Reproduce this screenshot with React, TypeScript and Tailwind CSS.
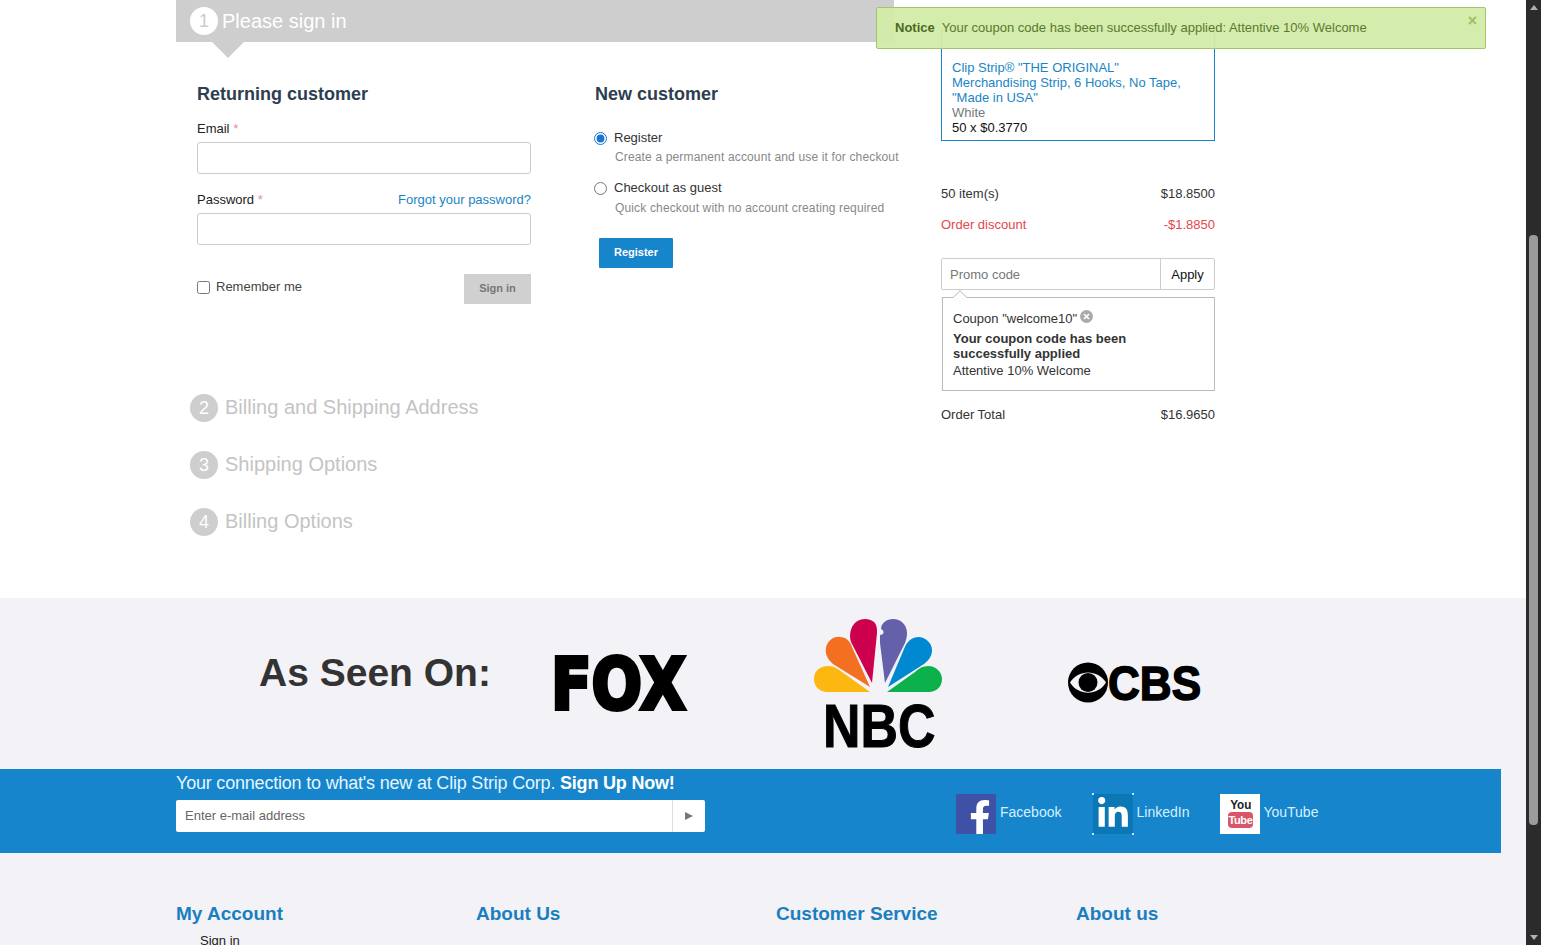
import { FaFacebookF, FaLinkedinIn } from 'react-icons/fa';

const footerColumns = ['My Account', 'About Us', 'Customer Service', 'About us'];
const steps = [
  { num: 2, title: 'Billing and Shipping Address' },
  { num: 3, title: 'Shipping Options' },
  { num: 4, title: 'Billing Options' },
];

function NbcLogo() {
  return (
    <svg width="129" height="142" viewBox="0 0 129 142" className="mt-[21px] ml-[120px] shrink-0">
      <path d="M56 73 L14 73 C5 73 0 67 0 60 C0 52 6 47 14 47 C20 47 24 50 28 53 Z" fill="#fcb711" />
      <path d="M56 68 L19 45 C13 40 11 34 12 29 C13 22 20 17 26 18 C32 18 36 22 38 28 Z" fill="#f37021" />
      <path d="M58 64 L37 23 C35 17 36 8 42 3 C47 -1 55 -1 60 3 C63 6 63 10 63 14 Z" fill="#cc004c" />
      <path d="M71 64 L66 24 L66 16 C70 16 71 12 67 10 C67 4 73 0 79 0 C87 0 93 6 93 14 C93 18 92 21 91 24 Z" fill="#6460aa" />
      <path d="M74 68 L90 30 C93 22 98 18 105 18 C113 19 118 25 118 31 C118 37 115 41 110 45 Z" fill="#0089d0" />
      <path d="M73 73 L101 53 C105 49 109 47 114 47 C122 47 128 53 128 60 C128 68 122 73 115 73 Z" fill="#0db14b" />
      <text
        transform="translate(9 128) scale(0.85 1)"
        fontFamily="'Liberation Sans', sans-serif"
        fontWeight="700"
        fontSize="61"
        fill="#000"
        stroke="#000"
        strokeWidth="1"
      >
        NBC
      </text>
    </svg>
  );
}

function CbsLogo() {
  return (
    <svg width="133" height="56" viewBox="0 -7 133 56" className="mt-[57px] ml-[125px] shrink-0">
      <circle cx="20" cy="20.5" r="20" fill="#000" />
      <path d="M2 20.5 C10 7 30 7 38 20.5 C30 34 10 34 2 20.5 Z" fill="#f2f2f7" />
      <circle cx="20" cy="20.5" r="9.5" fill="#000" />
      <text
        transform="translate(40 38) scale(0.9 1)"
        fontFamily="'Liberation Sans', sans-serif"
        fontWeight="700"
        fontSize="49"
        fill="#000"
        stroke="#000"
        strokeWidth="1.5"
      >
        CBS
      </text>
    </svg>
  );
}

function FoxLogo() {
  return (
    <svg width="145" height="86" viewBox="-6 -14 145 86" className="mt-[42px] ml-[58px] shrink-0">
      <text
        transform="translate(-4 54.5) scale(0.825 1)"
        fontFamily="'DejaVu Sans', sans-serif"
        fontWeight="700"
        fontSize="72"
        fill="#000"
        stroke="#000"
        strokeWidth="4"
      >
        FOX
      </text>
    </svg>
  );
}

export default function App() {
  return (
    <div className="relative flex h-[945px] overflow-hidden bg-white font-['Liberation_Sans',Arial,sans-serif] text-[13px] text-[#333]">
      <div className="w-[1526px] shrink-0">
        {/* Checkout */}
        <div className="flex h-[598px] pl-[176px]">
          <div className="w-[718px] shrink-0">
            <div className="relative flex h-[42px] items-center bg-[#cecece] pl-[14px] text-[20px] text-white">
              <span className="flex h-[28px] w-[28px] items-center justify-center rounded-full bg-white text-[18px] text-[#ccc]">1</span>
              <span className="ml-[4px]">Please sign in</span>
              <span className="absolute left-[36px] top-[42px] h-0 w-0 border-x-[16px] border-t-[16px] border-x-transparent border-t-[#cecece]" />
            </div>

            <div className="mt-[40px] flex pl-[21px]">
              <div className="w-[334px] shrink-0">
                <h2 className="text-[18px] leading-[24px] font-bold text-[#2c3e50]">Returning customer</h2>
                <div className="mt-[12px] pt-px leading-[20px] text-[#222]">
                  Email <span className="text-[#e0909a]">*</span>
                </div>
                <input className="mt-[3px] block h-[32px] w-full rounded-[3px] border border-[#ccc] bg-white" />
                <div className="mt-[15px] flex justify-between pt-px leading-[20px]">
                  <span className="text-[#222]">
                    Password <span className="text-[#e0909a]">*</span>
                  </span>
                  <a className="text-[#1a85c4]">Forgot your password?</a>
                </div>
                <input type="password" className="mt-[3px] block h-[32px] w-full rounded-[3px] border border-[#ccc] bg-white" />
                <div className="mt-[29px] flex h-[30px] items-center justify-between">
                  <label className="flex items-center gap-[6px] pb-[4px] text-[#444]">
                    <input type="checkbox" className="m-0 h-[13px] w-[13px]" />
                    Remember me
                  </label>
                  <button className="h-[30px] w-[67px] bg-[#d0d0d0] pb-[2px] text-[11px] font-bold text-[#777]">Sign in</button>
                </div>
              </div>

              <div className="ml-[64px] w-[299px] shrink-0 whitespace-nowrap">
                <h2 className="text-[18px] leading-[24px] font-bold text-[#2c3e50]">New customer</h2>
                <label className="mt-[22px] -ml-px flex h-[20px] items-center gap-[7px] text-[#333]">
                  <input type="radio" name="mode" defaultChecked className="m-0 h-[13px] w-[13px] accent-[#1a75d2]" />
                  Register
                </label>
                <div className="-mt-px ml-[20px] text-[12px] leading-[20px] tracking-[0.15px] text-[#888]">Create a permanent account and use it for checkout</div>
                <label className="mt-[11px] -ml-px flex h-[20px] items-center gap-[7px] text-[#333]">
                  <input type="radio" name="mode" className="m-0 h-[13px] w-[13px]" />
                  Checkout as guest
                </label>
                <div className="ml-[20px] text-[12px] leading-[20px] tracking-[0.15px] text-[#888]">Quick checkout with no account creating required</div>
                <button className="mt-[20px] ml-[4px] h-[30px] w-[74px] rounded-[1px] bg-[#1685cc] pb-[2px] text-[11px] font-bold text-white">Register</button>
              </div>
            </div>

            <div className="mt-[90px] flex flex-col gap-[29px] pl-[14px]">
              {steps.map((s) => (
                <div key={s.num} className="flex h-[28px] items-center text-[20px] text-[#c4c4c4]">
                  <span className="flex h-[28px] w-[28px] items-center justify-center rounded-full bg-[#cecece] text-[18px] text-white">{s.num}</span>
                  <span className="ml-[7px] pb-[2px]">{s.title}</span>
                </div>
              ))}
            </div>
          </div>

          {/* Order summary */}
          <div className="ml-[47px] w-[274px] shrink-0 text-[#333]">
            <div className="mt-[30px] h-[111px] border border-[#1685cc] px-[10px] pt-[29px] leading-[15px]">
              <a className="block text-[#1a85c4]">
                Clip Strip® "THE ORIGINAL" Merchandising Strip, 6 Hooks, No Tape, "Made in USA"
              </a>
              <div className="text-[#777]">White</div>
              <div className="text-[#111]">50 x $0.3770</div>
            </div>
            <div className="mt-[43px] flex justify-between leading-[20px]">
              <span>50 item(s)</span>
              <span>$18.8500</span>
            </div>
            <div className="mt-[11px] flex justify-between leading-[20px] text-[#e2474c]">
              <span>Order discount</span>
              <span>-$1.8850</span>
            </div>
            <div className="mt-[23px] flex h-[32px] rounded-[2px] border border-[#ccc]">
              <span className="flex flex-1 items-center pt-px pl-[8px] text-[#777]">Promo code</span>
              <span className="flex w-[54px] items-center justify-center border-l border-[#ccc] pt-px text-[#111]">Apply</span>
            </div>
            <div className="relative mt-[7px] ml-px h-[94px] border border-[#bbb] px-[10px] pt-[12px] leading-[15px]">
              <span className="absolute -top-[6px] left-[12px] h-[10px] w-[10px] rotate-45 border-t border-l border-[#ccc] bg-white" />
              <div className="flex items-start">
                <span className="leading-[18px]">Coupon "welcome10"</span>
                <svg width="13" height="13" viewBox="0 0 13 13" className="ml-[3px]">
                  <circle cx="6.5" cy="6.5" r="6.5" fill="#aaa" />
                  <path d="M4 4 L9 9 M9 4 L4 9" stroke="#fff" strokeWidth="1.6" />
                </svg>
              </div>
              <div className="mt-[3px] font-bold">Your coupon code has been successfully applied</div>
              <div className="mt-[2px]">Attentive 10% Welcome</div>
            </div>
            <div className="mt-[14px] flex justify-between leading-[20px]">
              <span>Order Total</span>
              <span>$16.9650</span>
            </div>
          </div>
        </div>

        {/* As seen on */}
        <div className="flex h-[171px] bg-[#f2f2f7] pl-[259px]">
          <div className="mt-[51px] text-[39px] leading-[48px] font-bold whitespace-nowrap text-[#333]">As Seen On:</div>
          <FoxLogo />
          <NbcLogo />
          <CbsLogo />
        </div>

        {/* Newsletter */}
        <div className="bg-[#f2f2f7]">
          <div className="flex h-[84px] w-[1501px] bg-[#1685cc] pl-[176px]">
            <div className="w-[529px] shrink-0">
              <div className="h-[31px] pt-[3px] text-[18px] leading-[22px] tracking-[-0.2px] whitespace-nowrap text-[#e4f6ff]">
                Your connection to what's new at Clip Strip Corp. <b className="text-white">Sign Up Now!</b>
              </div>
              <div className="flex h-[32px] rounded-[2px] bg-white">
                <span className="flex flex-1 items-center pl-[9px] text-[#666]">Enter e-mail address</span>
                <span className="flex w-[33px] items-center justify-center border-l border-[#ddd]">
                  <span className="h-0 w-0 border-y-[4px] border-l-[8px] border-y-transparent border-l-[#777]" />
                </span>
              </div>
            </div>

            <div className="ml-[251px] flex pt-[25px] text-[14px] text-[#d5f0ff]">
              <div className="flex">
                <span className="flex h-[40px] w-[40px] items-end justify-end overflow-hidden bg-[#3f51a5] pr-[4px]">
                  <FaFacebookF className="h-[34px] w-[24px] text-white" />
                </span>
                <span className="mt-[9px] ml-[4px] leading-[18px]">Facebook</span>
              </div>
              <div className="ml-[32px] flex">
                <span className="relative flex h-[40px] w-[40px] items-center justify-center bg-[#0b77b5]">
                  <FaLinkedinIn className="h-[34px] w-[34px] text-white" />
                  <span className="absolute -top-px -left-px h-[2px] w-[2px] bg-[#bfe6ff]" />
                  <span className="absolute -top-px -right-px h-[2px] w-[2px] bg-[#bfe6ff]" />
                  <span className="absolute -bottom-px -left-px h-[2px] w-[2px] bg-[#bfe6ff]" />
                  <span className="absolute -right-px -bottom-px h-[2px] w-[2px] bg-[#bfe6ff]" />
                </span>
                <span className="mt-[9px] ml-[3px] leading-[18px]">LinkedIn</span>
              </div>
              <div className="ml-[31px] flex">
                <span className="flex h-[40px] w-[40px] flex-col items-center bg-white pt-[4px]">
                  <span className="scale-x-90 text-[13px] leading-[13px] font-bold text-[#222]">You</span>
                  <span className="mt-px flex h-[16px] w-[25px] items-center justify-center rounded-[4px] bg-[#d9566a] text-[11px] font-bold tracking-[-0.4px] text-white">Tube</span>
                </span>
                <span className="mt-[9px] ml-[3px] leading-[18px]">YouTube</span>
              </div>
            </div>
          </div>
        </div>

        {/* Footer */}
        <div className="flex h-[92px] bg-[#f2f2f7] pt-[49px] pl-[176px]">
          {footerColumns.map((title, i) => (
            <div key={title} className="w-[300px]">
              <h3 className="text-[19px] leading-[24px] font-bold text-[#1a7fbf]">{title}</h3>
              {i === 0 && <div className="mt-[6px] ml-[24px] leading-[18px] text-[#222]">Sign in</div>}
            </div>
          ))}
        </div>
      </div>

      {/* Scrollbar */}
      <div className="flex w-[15px] shrink-0 flex-col items-center bg-[#2b2b2b]">
        <span className="mt-[5px] h-0 w-0 border-x-[4px] border-b-[5px] border-x-transparent border-b-[#b0b0b0]" />
        <span className="mt-[225px] h-[590px] w-[9px] rounded-[4px] bg-[#9b9b9b]" />
        <span className="mt-[110px] h-0 w-0 border-x-[4px] border-t-[5px] border-x-transparent border-t-[#b0b0b0]" />
      </div>

      {/* Notice */}
      <div className="absolute top-[7px] left-[876px] flex h-[42px] w-[610px] rounded-[2px] border border-[#a3c46e] bg-[#d2eba8]/95 pt-[12px] pl-[18px] leading-[16px] text-[#5c7a2e]">
        <b className="text-[#4c6a22]">Notice</b>
        <span className="ml-[7px]">Your coupon code has been successfully applied: Attentive 10% Welcome</span>
        <span className="absolute top-[5px] right-[8px] text-[16px] leading-[16px] font-bold text-[#9cc060]">×</span>
      </div>
    </div>
  );
}
